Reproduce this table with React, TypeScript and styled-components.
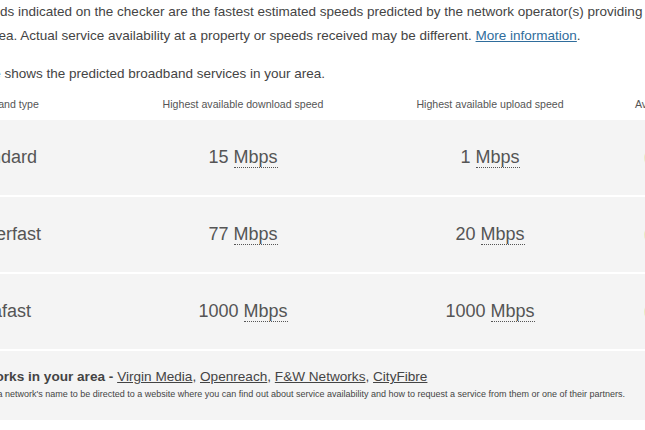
import React, { FC } from 'react';
import styled, { createGlobalStyle } from 'styled-components';

const GlobalStyle = createGlobalStyle`
  html, body {
    margin: 0;
    padding: 0;
    background: #fff;
    overflow: hidden;
  }
  body {
    font-family: "Liberation Sans", Arial, sans-serif;
    color: #444;
  }
`;

type Service = {
  id: number;
  type: string;
  download: number;
  upload: number;
};

const services: Service[] = [
  { id: 1, type: 'Standard', download: 15, upload: 1 },
  { id: 2, type: 'Superfast', download: 77, upload: 20 },
  { id: 3, type: 'Ultrafast', download: 1000, upload: 1000 },
];

const networks = ['Virgin Media', 'Openreach', 'F&W Networks', 'CityFibre'];

const Page = styled.div`
  margin-left: -36px;
  width: 840px;
`;

const Intro = styled.p`
  width: 752px;
  margin: 0;
  text-indent: 4.5px;
  font-size: 13.5px;
  line-height: 24px;
  color: #444;

  & + & {
    margin-top: 13.5px;
  }

  > a {
    color: #2f6d9c;
    text-decoration: underline;
  }
`;

const Table = styled.div`
  display: flex;
  flex-direction: column;
`;

const Grid = styled.div`
  display: grid;
  grid-template-columns: 155.5px 247px 247px 190px;
  align-items: center;
`;

const HeadRow = styled(Grid)`
  height: 34.5px;
  padding-top: 2px;
  box-sizing: border-box;
  font-size: 10.6px;
  color: #555;
`;

const HeadCell = styled.div<{ $left?: boolean }>`
  text-align: ${p => (p.$left ? 'left' : 'center')};
`;

const AvailHead = styled.div`
  padding-left: 21.5px;
`;

const Row = styled(Grid)`
  height: 75px;
  background: #f4f4f4;
  border-bottom: 2px solid #fff;
  font-size: 18px;
  color: #555;
`;

const TypeCell = styled.div`
  text-align: left;
`;

const SpeedCell = styled.div`
  text-align: center;

  > abbr {
    text-decoration: none;
    border-bottom: 1px dotted #555;
  }
`;

const AvailCell = styled.div`
  padding-left: 30px;
  display: flex;
  align-items: center;
`;

const Tick = styled.span`
  display: block;
  width: 20px;
  height: 20px;
  border-radius: 50%;
  background: #e9ecc4;
`;

const Footer = styled.div`
  background: #f4f4f4;
  padding: 17px 0 20px 0;
  margin-left: -1px;
`;

const Networks = styled.div`
  font-size: 13.6px;
  line-height: 18px;
  color: #444;

  > strong {
    font-weight: 700;
  }

  > a {
    color: #444;
    text-decoration: underline;
  }
`;

const Note = styled.div`
  margin-top: 2px;
  font-size: 9px;
  line-height: 12px;
  color: #444;
`;

const App: FC = () => (
  <Page>
    <GlobalStyle />
    <Intro>
      Speeds indicated on the checker are the fastest estimated speeds predicted by the network operator(s) providing
      services in the area. Actual service availability at a property or speeds received may be different.{' '}
      <a>More information</a>.
    </Intro>
    <Intro>Table shows the predicted broadband services in your area.</Intro>
    <Table>
      <HeadRow>
        <HeadCell $left>Broadband type</HeadCell>
        <HeadCell>Highest available download speed</HeadCell>
        <HeadCell>Highest available upload speed</HeadCell>
        <AvailHead>Availability</AvailHead>
      </HeadRow>
      {services.map(s => (
        <Row key={s.id}>
          <TypeCell>{s.type}</TypeCell>
          <SpeedCell>
            {s.download} <abbr title="megabits per second">Mbps</abbr>
          </SpeedCell>
          <SpeedCell>
            {s.upload} <abbr title="megabits per second">Mbps</abbr>
          </SpeedCell>
          <AvailCell>
            <Tick />
          </AvailCell>
        </Row>
      ))}
      <Footer>
        <Networks>
          <strong>Networks in your area - </strong>
          {networks.map((n, i) => (
            <React.Fragment key={n}>
              <a>{n}</a>
              {i < networks.length - 1 ? ', ' : ''}
            </React.Fragment>
          ))}
        </Networks>
        <Note>
          Click on a network&apos;s name to be directed to a website where you can find out about service availability
          and how to request a service from them or one of their partners.
        </Note>
      </Footer>
    </Table>
  </Page>
);

export default App;
